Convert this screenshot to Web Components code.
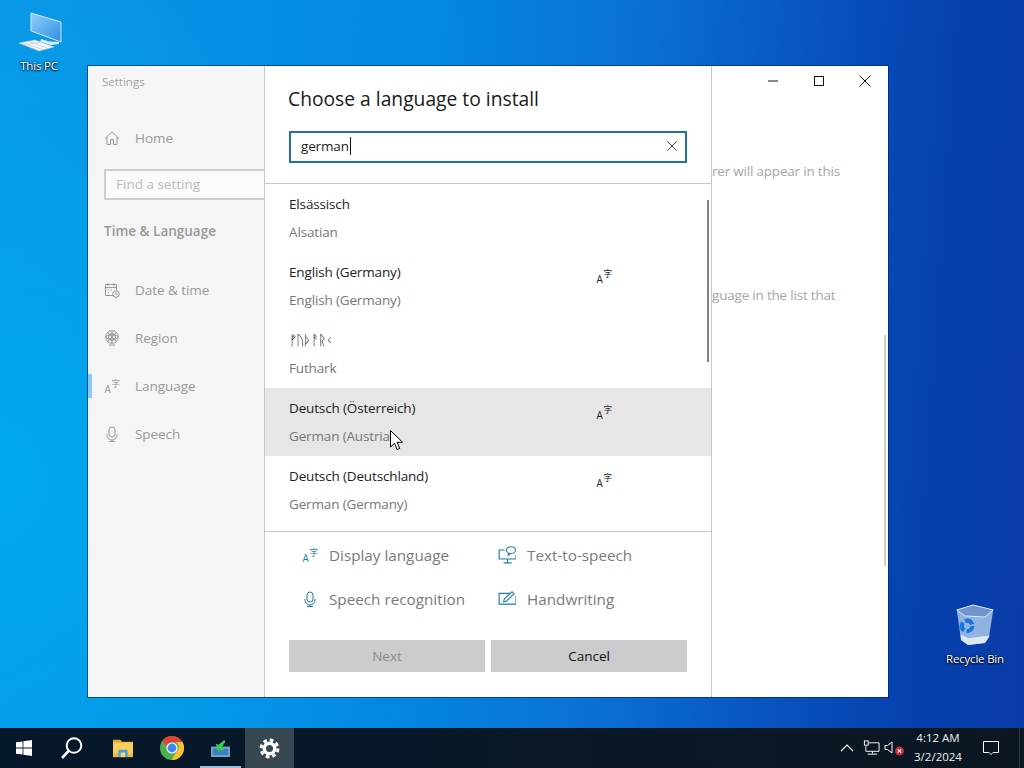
<!DOCTYPE html>
<html lang="en">
<head>
<meta charset="utf-8">
<title>Settings</title>
<style>
  html, body { margin: 0; padding: 0; width: 1024px; height: 768px; overflow: hidden; }
  body { font-family: "Open Sans", "Noto Sans", "Liberation Sans", sans-serif; }
</style>
</head>
<body>
<win-desktop>
  <desktop-icon slot="icons" name="pc" style="left:4px;top:8px">This PC</desktop-icon>
  <desktop-icon slot="icons" name="bin" style="left:940px;top:600px">Recycle Bin</desktop-icon>
  <settings-window slot="windows"></settings-window>
  <mouse-cursor slot="windows"></mouse-cursor>
  <task-bar slot="bar"></task-bar>
</win-desktop>

<script>
const LANG_TEXT = (fill, size = 16) => `
  <svg viewBox="0 0 16 16" width="${size}" height="${size}" style="overflow:visible">
    <text x="0.5" y="15" font-size="10" font-family="Open Sans, sans-serif" fill="${fill}">A</text>
    <text x="7.4" y="9" font-size="8.6" font-family="Noto Sans CJK SC, sans-serif" fill="${fill}">字</text>
  </svg>`;

const line = (body, size = 16, color = "currentColor", width = 1) => `
  <svg viewBox="0 0 16 16" width="${size}" height="${size}" fill="none" stroke="${color}" stroke-width="${width}">${body}</svg>`;

const ICONS = {
  home: () => line(`<path d="M1 8.5 8 1.8l7 6.7M3 6.8v7.7h3.5v-5h3v5H13V6.8"/>`),
  calendar: () => line(`<path d="M10 13.5H1.5v-11h11V8M1.5 5.5h11M4 1v3M10 1v3M4 8h1M7 8h1M4 10.5h1"/>
    <circle cx="12" cy="12" r="3.3"/><path d="M12 10v2.2h1.6"/>`),
  globe: () => line(`<circle cx="8" cy="7" r="6.3"/><circle cx="8" cy="7" r="3.6"/><ellipse cx="8" cy="7" rx="6" ry="2.2"/>
    <path d="M8 .8v12.4M3.6 2.6l8.8 8.8M12.4 2.6l-8.8 8.8M5 15h6"/>`),
  language: () => LANG_TEXT("currentColor"),
  mic: () => line(`<rect x="5" y="1" width="6" height="10" rx="3"/><path d="M3 8v1a5 5 0 0 0 10 0V8M8 14v1.5M5 15.5h6"/>`),
  "display-lang": () => LANG_TEXT("#1b7fa6"),
  "speech-mic": () => line(`<rect x="5" y="1" width="6" height="10" rx="3"/><path d="M3 8v1a5 5 0 0 0 10 0V8M8 14v1.5M5 15.5h6"/>`, 16, "#1b7fa6"),
  tts: () => line(`<path d="M6 3.5H1v8h15V8M8.5 11.5v3M5 15h7"/>
    <ellipse cx="11.5" cy="3.7" rx="4" ry="3"/><path d="M9.5 6.3 9 8.2l2.3-1.5"/>`, 18, "#1b7fa6"),
  pen: () => line(`<path d="M11 3H1v9.5h15V5"/><path d="M5 10.5l.6-2.4L12.5 1.5l1.8 1.8L7.5 10z"/>`, 18, "#1b7fa6"),
  clear: () => line(`<path d="M3.5 3.5l9 9M12.5 3.5l-9 9"/>`, 16, "#444"),
  minimize: () => line(`<path d="M3 8h10"/>`, 16, "#111"),
  maximize: () => line(`<rect x="3.5" y="3.5" width="9" height="9"/>`, 16, "#111"),
  close: () => line(`<path d="M2.5 2.5l11 11M13.5 2.5l-11 11"/>`, 16, "#111"),
  windows: () => `<svg viewBox="0 0 16 16" width="16" height="16" fill="#fff">
    <path d="M0 2.3 6.6 1.4v6.2H0zM7.4 1.3 16 0v7.6H7.4zM0 8.4h6.6v6.2L0 13.7zM7.4 8.4H16V16l-8.6-1.3z"/></svg>`,
  search: () => `<svg viewBox="0 0 24 24" width="24" height="24" fill="none" stroke="#fff">
    <circle cx="14" cy="9.5" r="7.3" stroke-width="2"/><path d="M8.7 14.8 2 22" stroke-width="2.6"/></svg>`,
  folder: () => `<svg viewBox="0 0 24 22" width="22" height="20">
    <path d="M1 2h8l2 2h12v3H1z" fill="#e0a92e"/><rect x="1" y="5" width="22" height="16" fill="#f6cf5b"/>
    <rect x="1" y="17" width="22" height="4" fill="#e8b94a"/><rect x="7" y="13" width="10" height="8" fill="#4a9fd0"/>
    <rect x="9.5" y="16" width="5" height="5" fill="#f3d77c"/></svg>`,
  chrome: () => `<svg viewBox="0 0 24 24" width="24" height="24">
    <circle cx="12" cy="12" r="12" fill="#4caf50"/>
    <path d="M12 0a12 12 0 0 1 10.4 6H12a6 6 0 0 0-5.6 3.8L2.3 5A12 12 0 0 1 12 0z" fill="#e5403a"/>
    <path d="M22.4 6A12 12 0 0 1 11.5 24l5.3-8.5A6 6 0 0 0 16 6z" fill="#fbc02d"/>
    <circle cx="12" cy="12" r="5.6" fill="#fff"/><circle cx="12" cy="12" r="4.4" fill="#4285f4"/></svg>`,
  installer: () => `<svg viewBox="0 0 20 18" width="19" height="17">
    <rect x="0" y="7" width="20" height="11" fill="#6fa6d6"/><rect x="2" y="9" width="16" height="7" fill="#3e82b8"/>
    <path d="M14 0 8 5 5 4l2 7 7-.5-3-2.5 4-6z" fill="#36d14a"/></svg>`,
  gear: () => `<svg viewBox="0 0 24 24" width="21" height="21" fill="none" stroke="#fff">
    <circle cx="12" cy="12" r="6" stroke-width="4"/>
    <circle cx="12" cy="12" r="9.6" stroke-width="3.4" stroke-dasharray="4.2 3.34"/></svg>`,
  chevron: () => line(`<path d="M2 11l6-6 6 6"/>`, 16, "#fff", 1.2),
  network: () => `<svg viewBox="0 0 18 16" width="17" height="16" fill="none" stroke="#fff">
    <path d="M6 2.5h11v9H3V6M10 11.5v2.5M5 14.5h10"/><rect x="1.5" y=".5" width="4" height="4.5" fill="#0b1a29"/></svg>`,
  volume: () => `<svg viewBox="0 0 20 16" width="20" height="16" fill="none" stroke="#fff">
    <path d="M1 5.5h2.5L8 2v11L3.5 9.5H1z"/>
    <circle cx="15.5" cy="11" r="4.5" fill="#c0303c" stroke="none"/><path d="M13.8 9.3l3.4 3.4M17.2 9.3l-3.4 3.4" stroke-width="1.1"/></svg>`,
  action: () => `<svg viewBox="0 0 16 16" width="16" height="16" fill="none" stroke="#fff">
    <path d="M.5 1.5h15v11H10L8 14.5 6 12.5H.5z"/></svg>`,
  pc: () => `<svg viewBox="0 0 48 46" width="48" height="46">
    <defs><linearGradient id="s" x1="0" y1="0" x2="1" y2="1"><stop offset="0" stop-color="#8fd0fb"/><stop offset="1" stop-color="#2f8fe0"/></linearGradient></defs>
    <path d="M16 5 46 14v20L16 23z" fill="url(#s)" stroke="#cfe9fb"/>
    <path d="M26 31l8 2.5 10 .5v2l-8 1-11-3z" fill="#dfe9f2"/>
    <path d="M4 35l16-3 19 7-15 4z" fill="#f2f6fa" stroke="#b8c8d6" stroke-width=".5"/>
    <path d="M10 35.5l17 6M15 34l17 6M8 37l17-3" stroke="#a9bac9" stroke-width=".5"/></svg>`,
  bin: () => `<svg viewBox="0 0 48 48" width="46" height="46">
    <path d="M5 10.4 22 5.2l21 5.2-4.4 28.2-4.2 6.3L16.7 47l-7.3-5.2z" fill="#a9c8ea" opacity=".85"/>
    <path d="M5 10.4 22 5.2l21 5.2-8.6 7.3-20.8-1z" fill="#6f95cc" stroke="#dfeaf6"/>
    <path d="M9 36l8 4 22-3-.4 1.6-4.2 6.3L16.7 47l-7.3-5.2z" fill="#dbe7f2"/>
    <circle cx="15.7" cy="27" r="5.5" fill="none" stroke="#1976dc" stroke-width="4.4" stroke-dasharray="9 2.5"/></svg>`,
};

class WinIcon extends HTMLElement {
  connectedCallback() {
    const name = this.getAttribute("name");
    this.attachShadow({ mode: "open" });
    this.shadowRoot.innerHTML = `
      <style>
        :host { display: inline-flex; align-items: center; justify-content: center; flex: none; }
        svg { display: block; }
      </style>
      ${ICONS[name]()}
    `;
  }
}
customElements.define("win-icon", WinIcon);

class WinDesktop extends HTMLElement {
  constructor() {
    super();
    this.attachShadow({ mode: "open" });
    this.shadowRoot.innerHTML = `
      <style>
        :host {
          display: flex;
          flex-direction: column;
          width: 1024px;
          height: 768px;
          overflow: hidden;
        }
        .wallpaper {
          position: relative;
          height: 728px;
          background:
            radial-gradient(ellipse 420px 520px at 0px 480px, #00a8f0 0%, rgba(0,168,240,0) 100%),
            linear-gradient(94deg, #0a98e6 0%, #0488e4 40%, #0a70d6 60%, #0850bc 78%, #0540ae 90%, #0a3ca8 100%);
        }
      </style>
      <div class="wallpaper">
        <slot name="icons"></slot>
        <slot name="windows"></slot>
      </div>
      <slot name="bar"></slot>
    `;
  }
}
customElements.define("win-desktop", WinDesktop);

class DesktopIcon extends HTMLElement {
  connectedCallback() {
    const name = this.getAttribute("name");
    this.attachShadow({ mode: "open" });
    this.shadowRoot.innerHTML = `
      <style>
        :host {
          position: absolute;
          display: flex;
          flex-direction: column;
          align-items: center;
          width: 70px;
          font-size: 11.5px;
          letter-spacing: -.2px;
          color: #fff;
          text-shadow: 0 1px 2px #000, 0 0 2px #000;
        }
        win-icon { height: 46px; }
        .label { margin-top: 4px; }
        :host([name="bin"]) .label { margin-top: 5px; }
      </style>
      <win-icon name="${name}"></win-icon>
      <div class="label"><slot></slot></div>
    `;
  }
}
customElements.define("desktop-icon", DesktopIcon);

class NavItem extends HTMLElement {
  connectedCallback() {
    const icon = this.getAttribute("icon");
    const selected = this.hasAttribute("selected");
    this.attachShadow({ mode: "open" });
    this.shadowRoot.innerHTML = `
      <style>
        :host {
          display: flex;
          align-items: center;
          position: relative;
          height: 48px;
          padding-left: 16px;
          gap: 15px;
          font-size: 13.5px;
          letter-spacing: -.05px;
          color: #999;
        }
        .bar {
          position: absolute;
          left: 0;
          top: 12px;
          width: 4px;
          height: 24px;
          background: #8ec8f6;
          display: ${selected ? "block" : "none"};
        }
      </style>
      <span class="bar"></span>
      <win-icon name="${icon}"></win-icon>
      <slot></slot>
    `;
  }
}
customElements.define("nav-item", NavItem);

class SettingsSidebar extends HTMLElement {
  constructor() {
    super();
    this.attachShadow({ mode: "open" });
    this.shadowRoot.innerHTML = `
      <style>
        :host {
          display: block;
          flex: none;
          width: 176px;
          background: #f5f5f5;
          overflow: hidden;
        }
        .title { height: 32px; line-height: 32px; padding-left: 14px; font-size: 11.5px; color: #a3a3a3; }
        .search {
          width: 200px;
          height: 31px;
          box-sizing: border-box;
          margin: 7px 0 0 16px;
          padding-left: 10px;
          border: 2px solid #cdcdcd;
          background: #fafafa;
          font-size: 13.5px;
          line-height: 27px;
          color: #bcbcbc;
        }
        .section {
          height: 30px;
          line-height: 30px;
          margin-top: 16px;
          padding-left: 16px;
          font-size: 13.5px;
          font-weight: 600;
          color: #999;
        }
        .home { margin-top: 16px; }
        .items { margin-top: 20px; }
      </style>
      <div class="title">Settings</div>
      <nav-item class="home" icon="home">Home</nav-item>
      <div class="search">Find a setting</div>
      <div class="section">Time &amp; Language</div>
      <div class="items">
        <nav-item icon="calendar">Date &amp; time</nav-item>
        <nav-item icon="globe">Region</nav-item>
        <nav-item icon="language" selected>Language</nav-item>
        <nav-item icon="mic">Speech</nav-item>
      </div>
    `;
  }
}
customElements.define("settings-sidebar", SettingsSidebar);

class LangRow extends HTMLElement {
  connectedCallback() {
    const hasIcon = this.hasAttribute("display");
    this.attachShadow({ mode: "open" });
    this.shadowRoot.innerHTML = `
      <style>
        :host {
          display: flex;
          height: 68px;
          box-sizing: border-box;
          padding: 6px 0 6px 24px;
          font-size: 13.5px;
          letter-spacing: -.15px;
          line-height: 28px;
        }
        :host([hover]) { background: #e6e6e6; }
        .text { width: 307px; }
        .name { color: #222; }
        .english { color: #777; }
        win-icon { height: 16px; margin-top: 10px; color: #222; visibility: ${hasIcon ? "visible" : "hidden"}; }
      </style>
      <div class="text">
        <div class="name"><slot></slot></div>
        <div class="english"><slot name="english"></slot></div>
      </div>
      <win-icon name="language"></win-icon>
    `;
  }
}
customElements.define("lang-row", LangRow);

class FeatureItem extends HTMLElement {
  connectedCallback() {
    const icon = this.getAttribute("icon");
    this.attachShadow({ mode: "open" });
    this.shadowRoot.innerHTML = `
      <style>
        :host {
          display: flex;
          align-items: center;
          gap: 11px;
          height: 44px;
          font-size: 15.25px;
          color: #7a7a7a;
        }
      </style>
      <win-icon name="${icon}"></win-icon>
      <slot></slot>
    `;
  }
}
customElements.define("feature-item", FeatureItem);

class LanguageDialog extends HTMLElement {
  constructor() {
    super();
    this.attachShadow({ mode: "open" });
    this.shadowRoot.innerHTML = `
      <style>
        :host {
          display: flex;
          flex-direction: column;
          flex: none;
          width: 448px;
          box-sizing: border-box;
          border-left: 1px solid #c8c8c8;
          border-right: 1px solid #c8c8c8;
          background: #fff;
        }
        h2 {
          margin: 16px 0 0 23px;
          font-size: 19.25px;
          line-height: 34px;
          font-weight: 400;
          color: #1a1a1a;
        }
        .search {
          display: flex;
          align-items: center;
          justify-content: space-between;
          box-sizing: border-box;
          width: 398px;
          height: 32px;
          margin: 15px 0 20px 24px;
          padding: 0 5px 2px 10px;
          border: 2px solid #1f7396;
          font-size: 13.5px;
          letter-spacing: -.15px;
          color: #222;
        }
        .query { display: flex; align-items: center; }
        .caret { display: inline-block; width: 1px; height: 18px; background: #111; margin-left: 1px; }
        .list {
          position: relative;
          height: 347px;
          overflow: hidden;
          border-top: 1px solid #c8c8c8;
          border-bottom: 1px solid #c8c8c8;
        }
        .runes { font-family: "DejaVu Sans", "Noto Sans", sans-serif; letter-spacing: -.8px; }
        .thumb {
          position: absolute;
          right: 2px;
          top: 16px;
          width: 2px;
          height: 162px;
          background: #808080;
        }
        .features {
          display: grid;
          grid-template-columns: 196px 1fr;
          padding: 1px 0 0 37px;
        }
        .buttons {
          display: flex;
          gap: 6px;
          margin: 19px 0 0 24px;
        }
        .btn {
          width: 196px;
          height: 32px;
          line-height: 32px;
          text-align: center;
          background: #cccccc;
          font-size: 13.5px;
          color: #111;
        }
        .btn.off { color: #8a8a8a; }
      </style>
      <h2>Choose a language to install</h2>
      <div class="search">
        <span class="query">german<span class="caret"></span></span>
        <win-icon name="clear"></win-icon>
      </div>
      <div class="list">
        <lang-row>Elsässisch<span slot="english">Alsatian</span></lang-row>
        <lang-row display>English (Germany)<span slot="english">English (Germany)</span></lang-row>
        <lang-row><span class="runes">ᚠᚢᚦᚨᚱᚲ</span><span slot="english">Futhark</span></lang-row>
        <lang-row display hover>Deutsch (Österreich)<span slot="english">German (Austria)</span></lang-row>
        <lang-row display>Deutsch (Deutschland)<span slot="english">German (Germany)</span></lang-row>
        <div class="thumb"></div>
      </div>
      <div class="features">
        <feature-item icon="display-lang">Display language</feature-item>
        <feature-item icon="tts">Text-to-speech</feature-item>
        <feature-item icon="speech-mic">Speech recognition</feature-item>
        <feature-item icon="pen">Handwriting</feature-item>
      </div>
      <div class="buttons">
        <div class="btn off">Next</div>
        <div class="btn">Cancel</div>
      </div>
    `;
  }
}
customElements.define("language-dialog", LanguageDialog);

class SettingsWindow extends HTMLElement {
  constructor() {
    super();
    this.attachShadow({ mode: "open" });
    this.shadowRoot.innerHTML = `
      <style>
        :host {
          position: absolute;
          left: 88px;
          top: 66px;
          width: 800px;
          height: 631px;
          display: flex;
          background: #fff;
          box-shadow: 0 0 0 1px rgba(0, 40, 90, .65);
          overflow: hidden;
        }
        .pane {
          position: relative;
          flex: 1;
          font-size: 13.5px;
          letter-spacing: -.2px;
          color: #a6a6a6;
          white-space: nowrap;
        }
        .caption {
          display: flex;
          justify-content: flex-end;
          height: 32px;
        }
        .caption win-icon { width: 46px; height: 30px; }
        .note { position: absolute; left: 0; }
        .thumb {
          position: absolute;
          right: 2px;
          top: 269px;
          width: 2px;
          height: 231px;
          background: #cfcfcf;
        }
      </style>
      <settings-sidebar></settings-sidebar>
      <language-dialog></language-dialog>
      <div class="pane">
        <div class="caption">
          <win-icon name="minimize"></win-icon>
          <win-icon name="maximize"></win-icon>
          <win-icon name="close"></win-icon>
        </div>
        <div class="note" style="top:96px">rer will appear in this</div>
        <div class="note" style="top:220px">guage in the list that</div>
        <div class="thumb"></div>
      </div>
    `;
  }
}
customElements.define("settings-window", SettingsWindow);

class MouseCursor extends HTMLElement {
  constructor() {
    super();
    this.attachShadow({ mode: "open" });
    this.shadowRoot.innerHTML = `
      <style>
        :host { position: absolute; left: 390px; top: 430px; width: 13px; height: 21px; }
        svg { display: block; }
      </style>
      <svg viewBox="0 0 13 21" width="13" height="21">
        <path d="M.5.5v16.5l4-3.7 2.6 6.2 2.6-1.1-2.6-6.1h5.5z" fill="#fff" stroke="#000"/>
      </svg>
    `;
  }
}
customElements.define("mouse-cursor", MouseCursor);

class TaskButton extends HTMLElement {
  connectedCallback() {
    const icon = this.getAttribute("icon");
    this.attachShadow({ mode: "open" });
    this.shadowRoot.innerHTML = `
      <style>
        :host {
          display: flex;
          align-items: center;
          justify-content: center;
          position: relative;
          flex: none;
          width: var(--w, 48px);
          height: 40px;
        }
        :host([active]) { background: #37474f; }
        :host([running])::after {
          content: "";
          position: absolute;
          left: 4px;
          right: 4px;
          bottom: 0;
          height: 2px;
          background: #9cc0e2;
        }
      </style>
      <win-icon name="${icon}"></win-icon>
    `;
  }
}
customElements.define("task-button", TaskButton);

class TaskBar extends HTMLElement {
  constructor() {
    super();
    this.attachShadow({ mode: "open" });
    this.shadowRoot.innerHTML = `
      <style>
        :host {
          display: flex;
          align-items: center;
          flex: none;
          height: 40px;
          background: linear-gradient(90deg, #06182b, #0a1826 60%, #0b1622);
          color: #fff;
        }
        .tasks { display: flex; margin-left: 2px; --w: 49px; }
        .tray { display: flex; align-items: center; margin-left: auto; height: 40px; }
        .tray win-icon { height: 40px; }
        .chevron, .network { width: 24px; }
        .volume { width: 21px; }
        .clock {
          width: 68px;
          margin-top: -2px;
          text-align: center;
          font-size: 11.5px;
          line-height: 19px;
          color: #eee;
        }
        .action { width: 38px; }
        .edge { width: 1px; height: 40px; margin: 0 4px 0 9px; background: #2a3845; }
      </style>
      <task-button icon="windows"></task-button>
      <task-button icon="search"></task-button>
      <div class="tasks">
        <task-button icon="folder"></task-button>
        <task-button icon="chrome"></task-button>
        <task-button icon="installer" running></task-button>
        <task-button icon="gear" active></task-button>
      </div>
      <div class="tray">
        <win-icon class="chevron" name="chevron"></win-icon>
        <win-icon class="network" name="network"></win-icon>
        <win-icon class="volume" name="volume"></win-icon>
        <div class="clock"><div>4:12 AM</div><div>3/2/2024</div></div>
        <win-icon class="action" name="action"></win-icon>
        <div class="edge"></div>
      </div>
    `;
  }
}
customElements.define("task-bar", TaskBar);
</script>
</body>
</html>
